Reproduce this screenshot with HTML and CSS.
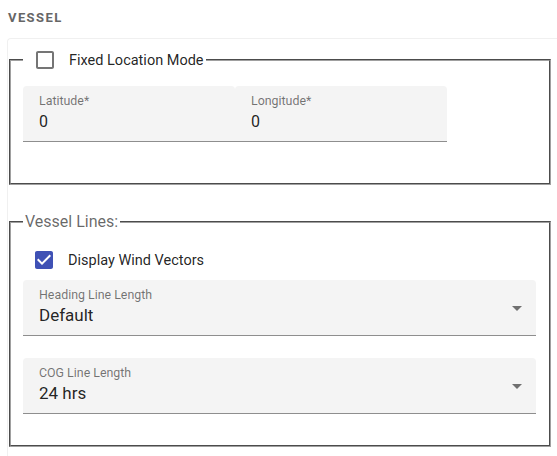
FILE: index.html
```html
<!DOCTYPE html>
<html lang="en">
<head>
<meta charset="utf-8">
<title>Vessel settings</title>
<link rel="stylesheet" href="styles.css">
</head>
<body>
  <h2 class="section-title">Vessel</h2>
  <div class="card">
    <fieldset class="group group-location">
      <legend class="legend legend-check">
        <label class="check">
          <span class="check-box">
            <svg viewBox="0 0 24 24" width="24" height="24"><path class="check-off" d="M19 5v14H5V5h14m0-2H5c-1.1 0-2 .9-2 2v14c0 1.1.9 2 2 2h14c1.1 0 2-.9 2-2V5c0-1.1-.9-2-2-2z"/></svg>
          </span>
          <span class="check-text">Fixed Location Mode</span>
        </label>
      </legend>
      <div class="coord-row">
        <div class="field field-half">
          <span class="field-label">Latitude*</span>
          <span class="field-value">0</span>
        </div>
        <div class="field field-half">
          <span class="field-label">Longitude*</span>
          <span class="field-value">0</span>
        </div>
      </div>
    </fieldset>

    <fieldset class="group group-lines">
      <legend class="legend legend-text">Vessel Lines:</legend>
      <label class="check check-row">
        <span class="check-box">
          <svg viewBox="0 0 24 24" width="24" height="24"><path class="check-on" d="M19 3H5c-1.11 0-2 .9-2 2v14c0 1.1.89 2 2 2h14c1.11 0 2-.9 2-2V5c0-1.1-.89-2-2-2zm-9 14l-5-5 1.41-1.41L10 14.17l7.59-7.59L19 8l-9 9z"/></svg>
        </span>
        <span class="check-text">Display Wind Vectors</span>
      </label>
      <div class="field field-select">
        <span class="field-label">Heading Line Length</span>
        <span class="field-value select-value">Default</span>
        <svg class="select-arrow" viewBox="0 0 24 24" width="24" height="24"><path d="M7 10l5 5 5-5z"/></svg>
      </div>
      <div class="field field-select field-select-second">
        <span class="field-label">COG Line Length</span>
        <span class="field-value select-value">24 hrs</span>
        <svg class="select-arrow" viewBox="0 0 24 24" width="24" height="24"><path d="M7 10l5 5 5-5z"/></svg>
      </div>
    </fieldset>
  </div>
</body>
</html>
```

FILE: styles.css
```css
html, body {
  margin: 0;
  padding: 0;
  background: #ffffff;
  overflow: hidden;
}

body {
  font-family: Roboto, "Noto Sans", Arial, sans-serif;
  color: rgba(0, 0, 0, 0.87);
}

.section-title {
  margin: 0 0 12px 0;
  padding: 10px 8px 0 8px;
  font-size: 13px;
  line-height: 16px;
  font-weight: 700;
  letter-spacing: 1.4px;
  text-transform: uppercase;
  color: #666666;
}

.card {
  margin-left: 7px;
  border-top: 1px solid #f0f0f0;
  border-left: 1px solid #f0f0f0;
  border-radius: 4px 0 0 0;
  min-height: 440px;
  box-sizing: border-box;
}

.group {
  box-sizing: border-box;
  width: 542px;
  margin: 0 0 0 1px;
  border: 2px groove #a0a0a0;
  min-width: 0;
}

.group-location {
  padding: 5px 12px 41px 12px;
}

.group-lines {
  margin-top: 27px;
  padding: 7px 12px 31px 12px;
}

.legend {
  margin: 0;
}

.legend-check {
  padding: 0 2px 0 1px;
}

.legend-text {
  padding: 0 2px;
  font-size: 16px;
  line-height: 20px;
  color: rgba(0, 0, 0, 0.6);
}

.check {
  display: flex;
  align-items: center;
  height: 42px;
  cursor: pointer;
}

.check-box {
  display: flex;
  padding: 9px;
}

.check-off {
  fill: rgba(0, 0, 0, 0.54);
}

.check-on {
  fill: #3f51b5;
}

.check-text {
  margin-left: 3px;
  padding-top: 2px;
  font-size: 14.5px;
  line-height: 20px;
  color: rgba(0, 0, 0, 0.87);
}

.coord-row {
  display: flex;
  width: 424px;
}

.field {
  position: relative;
  box-sizing: border-box;
  height: 56px;
  padding: 8px 16px 0 16px;
  background: #f4f4f4;
  border-radius: 4px 4px 0 0;
  border-bottom: 1px solid rgba(0, 0, 0, 0.42);
  display: flex;
  flex-direction: column;
}

.field-half {
  flex: 1 1 0;
}

.field-label {
  font-size: 12.4px;
  line-height: 14px;
  color: rgba(0, 0, 0, 0.54);
}

.field-value {
  margin-top: 4px;
  font-size: 16px;
  line-height: 19px;
  color: rgba(0, 0, 0, 0.87);
}

.field-select {
  margin: -1px 1px 0 0;
}

.field-select-second {
  margin-top: 22px;
}

.select-value {
  font-size: 17px;
}

.select-arrow {
  position: absolute;
  right: 7px;
  top: 16px;
  fill: rgba(0, 0, 0, 0.54);
}
```
